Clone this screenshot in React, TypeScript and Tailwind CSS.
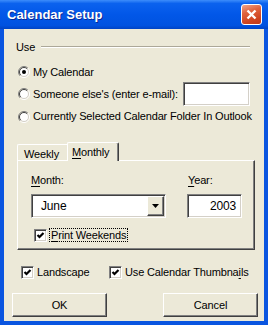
import React from "react";

const U = ({ children }: { children: React.ReactNode }) => (
  <span className="underline underline-offset-[2px] decoration-1">{children}</span>
);

const sunken =
  "border border-t-[#808080] border-l-[#808080] border-r-white border-b-white shadow-[inset_1px_1px_0_#404040,inset_-1px_-1px_0_#D4D0C8]";
const raised =
  "border border-t-white border-l-white border-r-[#404040] border-b-[#404040] shadow-[inset_-1px_-1px_0_#808080]";

const Radio = ({ checked }: { checked?: boolean }) => (
  <svg width="12" height="12" viewBox="0 0 12 12" className="shrink-0">
    <circle cx="6" cy="6" r="4.5" fill="#fff" />
    <path d="M2.1 9.9 A5.5 5.5 0 0 1 9.9 2.1" fill="none" stroke="#808080" />
    <path d="M2.8 9.2 A4.5 4.5 0 0 1 9.2 2.8" fill="none" stroke="#404040" />
    <path d="M2.1 9.9 A5.5 5.5 0 0 0 9.9 2.1" fill="none" stroke="#fff" />
    <path d="M2.8 9.2 A4.5 4.5 0 0 0 9.2 2.8" fill="none" stroke="#D4D0C8" />
    {checked && <circle cx="6" cy="6" r="2" fill="#000" />}
  </svg>
);

const Check = ({ checked }: { checked?: boolean }) => (
  <span className={`relative w-[13px] h-[13px] shrink-0 bg-white ${sunken}`}>
    {checked && (
      <svg width="13" height="13" viewBox="0 0 13 13" className="absolute -left-px -top-px">
        <polyline points="3.5,6 5.5,8 9.5,4" fill="none" stroke="#000" strokeWidth="2.2" />
      </svg>
    )}
  </span>
);

const RadioRow = ({ label, checked, h }: { label: string; checked?: boolean; h: string }) => (
  <div className={`flex items-center gap-[3px] pl-[2px] ${h}`}>
    <Radio checked={checked} />
    <span>{label}</span>
  </div>
);

export default function App() {
  return (
    <div className="w-[268px] h-[325px] flex flex-col whitespace-nowrap bg-[#0A55E0] font-['Liberation_Sans',Arial,sans-serif] text-[11px] tracking-[-0.15px] text-black">
      <div className="h-[29px] shrink-0 flex items-center pl-[7px] pr-[6px] bg-[linear-gradient(180deg,#3D8DFB_0%,#0B62EE_12%,#0257E8_50%,#0052E0_88%,#0043C4_100%)]">
        <span className="flex-1 text-white font-bold text-[13px] tracking-normal [text-shadow:1px_1px_0_#0A2A96]">
          Calendar Setup
        </span>
        <span className="w-[21px] h-[21px] rounded-[3px] border border-white flex items-center justify-center bg-[linear-gradient(160deg,#F0A58A_0%,#E0643F_35%,#CF4420_75%,#C0391A_100%)]">
          <svg width="13" height="13" viewBox="0 0 13 13">
            <path d="M2.5 2.5 L10.5 10.5 M10.5 2.5 L2.5 10.5" stroke="#fff" strokeWidth="2.4" />
          </svg>
        </span>
      </div>

      <div className="flex-1 mx-[4px] mb-[4px] bg-[#ECE9D8] flex flex-col pl-[12px] pr-[9px]">
        <div className="mt-[11px] h-[14px] flex items-center gap-[6px] pr-[5px]">
          <span>Use</span>
          <span className="flex-1 h-[2px] border-t border-t-[#ACA899] border-b border-b-white" />
        </div>

        <div className="mt-[7px] flex flex-col">
          <RadioRow label="My Calendar" checked h="h-[22px]" />
          <div className="flex items-center h-[22px] pl-[2px] gap-[3px]">
            <Radio />
            <span>Someone else's (enter e-mail):</span>
            <span className={`ml-auto mr-[5px] w-[67px] h-[24px] shrink-0 bg-white ${sunken}`} />
          </div>
          <RadioRow label="Currently Selected Calendar Folder In Outlook" h="h-[23px]" />
        </div>

        <div className="mt-[14px] ml-[1px] h-[18px] flex items-end">
          <div className="w-[50px] h-[16px] pl-[6px] pt-[1px] border-t border-l border-white rounded-tl-[2px]">
            <U>W</U>eekly
          </div>
          <div className="relative w-[52px] h-[19px] -mb-px z-10 bg-[#ECE9D8] pl-[4px] pt-[1px] border-t border-l border-white border-r border-r-[#404040] shadow-[inset_-1px_0_0_#808080] rounded-t-[2px]">
            <U>M</U>onthly
          </div>
        </div>

        <div className="ml-[1px] h-[90px] border border-t-white border-l-white border-r-[#404040] border-b-[#404040] shadow-[inset_-1px_-1px_0_#808080] pl-[13px] pr-[12px] pt-[12px] flex flex-col">
          <div className="flex h-[14px] items-center">
            <span className="flex-1">
              <U>M</U>onth:
            </span>
            <span className="w-[54px]">
              <U>Y</U>ear:
            </span>
          </div>
          <div className="mt-[7px] flex h-[24px]">
            <div className={`w-[135px] h-[24px] bg-white flex items-center ${sunken}`}>
              <span className="flex-1 pl-[9px] text-[12px]">June</span>
              <span className={`w-[17px] h-[20px] mr-px bg-[#ECE9D8] flex items-center justify-center ${raised}`}>
                <svg width="7" height="4" viewBox="0 0 7 4">
                  <path d="M0 0 H7 L3.5 4 Z" fill="#000" />
                </svg>
              </span>
            </div>
            <div className={`ml-auto w-[55px] h-[24px] bg-white flex items-center justify-end pr-[5px] text-[12px] ${sunken}`}>
              2003
            </div>
          </div>
          <div className="mt-[10px] h-[14px] flex items-center pl-[3px] gap-[2px]">
            <Check checked />
            <span className="border border-dotted border-black px-px leading-[12px]">
              <U>P</U>rint Weekends
            </span>
          </div>
        </div>

        <div className="mt-[15px] h-[14px] flex items-center pl-[5px]">
          <Check checked />
          <span className="ml-[3px] w-[72px]">Landscape</span>
          <Check checked />
          <span className="ml-[3px]">
            Use Calendar Thumbna<U>i</U>ls
          </span>
        </div>

        <div className="mt-[14px] -ml-[4px] -mr-[3px] flex justify-between">
          <button className={`w-[95px] h-[24px] bg-[#ECE9D8] ${raised}`}>OK</button>
          <button className={`w-[95px] h-[24px] bg-[#ECE9D8] ${raised}`}>Cancel</button>
        </div>
      </div>
    </div>
  );
}
